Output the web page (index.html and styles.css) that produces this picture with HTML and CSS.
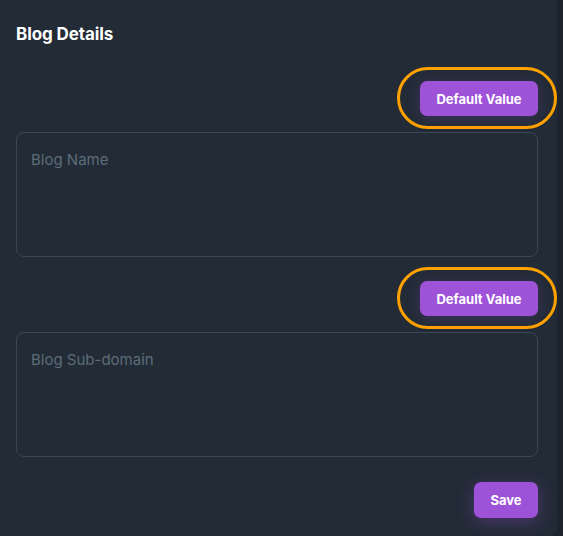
FILE: index.html
```html
<!DOCTYPE html>
<html>
<head>
<meta charset="utf-8">
<link rel="stylesheet" href="styles.css">
</head>
<body>
<div class="panel">
  <h2 class="title">Blog Details</h2>
  <div class="field">
    <div class="actions">
      <span class="ring"></span>
      <button class="btn">Default Value</button>
    </div>
    <div class="textarea"><span class="placeholder">Blog Name</span></div>
  </div>
  <div class="field">
    <div class="actions">
      <span class="ring"></span>
      <button class="btn">Default Value</button>
    </div>
    <div class="textarea"><span class="placeholder">Blog Sub-domain</span></div>
  </div>
  <div class="footer">
    <button class="btn btn-save">Save</button>
  </div>
</div>
</body>
</html>
```
FILE: styles.css
```css
html, body {
  margin: 0;
  padding: 0;
  background: #1d242d;
  font-family: Inter, "Liberation Sans", sans-serif;
}
.panel {
  width: 557px;
  height: 536px;
  box-sizing: border-box;
  background: #222b36;
  border-bottom-right-radius: 8px;
  padding: 22px 19px 0 16px;
}
.title {
  margin: 0;
  font-size: 17px;
  line-height: 24px;
  font-weight: 700;
  color: #ffffff;
  letter-spacing: -0.1px;
}
.field {
  display: flex;
  flex-direction: column;
}
.field + .field {
  margin-top: 24px;
}
.field:first-of-type .actions {
  margin-top: 35px;
}
.actions {
  position: relative;
  display: flex;
  justify-content: flex-end;
  margin-bottom: 16px;
}
.btn {
  border: none;
  background: #9d52d8;
  color: #ffffff;
  font-family: Inter, "Liberation Sans", sans-serif;
  font-weight: 700;
  font-size: 13px;
  height: 35px;
  padding: 0 16px;
  width: 118px;
  border-radius: 7px;
  box-shadow: 0 2px 14px rgba(157, 82, 216, 0.25);
  position: relative;
  z-index: 1;
}
.ring {
  position: absolute;
  right: -19px;
  top: -14px;
  width: 154px;
  height: 56px;
  border: 3px solid #ffa200;
  border-radius: 32px;
}
.textarea {
  height: 125px;
  box-sizing: border-box;
  border: 1px solid #3a4754;
  border-radius: 8px;
  padding: 16px 14px;
}
.placeholder {
  color: #5d6c79;
  font-size: 15px;
  line-height: 18px;
}
.footer {
  display: flex;
  justify-content: flex-end;
  margin-top: 25px;
}
.btn-save {
  padding: 0;
  width: 64px;
  height: 36px;
  box-shadow: 0 4px 18px rgba(157, 82, 216, 0.35);
}
```
